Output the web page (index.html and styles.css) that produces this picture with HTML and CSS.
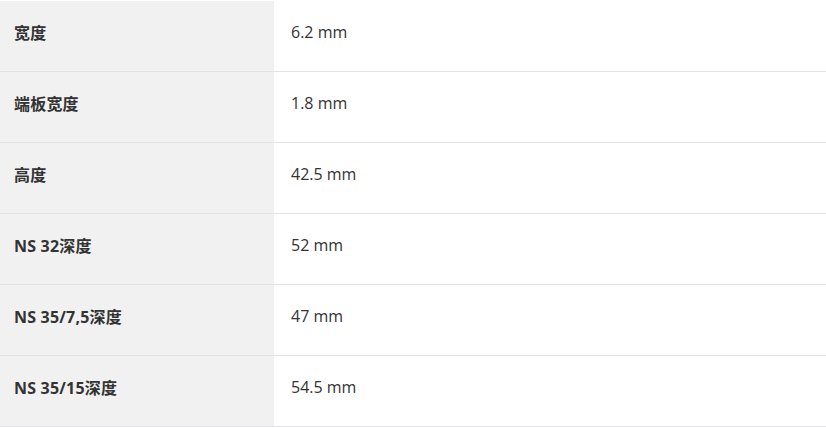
FILE: index.html
```html
<!DOCTYPE html>
<html lang="zh">
<head>
<meta charset="utf-8">
<link rel="stylesheet" href="styles.css">
</head>
<body>
<div class="specs">
  <div class="row"><div class="label">宽度</div><div class="value">6.2 mm</div></div>
  <div class="row"><div class="label">端板宽度</div><div class="value">1.8 mm</div></div>
  <div class="row"><div class="label">高度</div><div class="value">42.5 mm</div></div>
  <div class="row"><div class="label">NS 32深度</div><div class="value">52 mm</div></div>
  <div class="row"><div class="label">NS 35/7,5深度</div><div class="value">47 mm</div></div>
  <div class="row"><div class="label">NS 35/15深度</div><div class="value">54.5 mm</div></div>
</div>
</body>
</html>
```
FILE: styles.css
```css
html, body {
  margin: 0;
  padding: 0;
  background: #fff;
}
body {
  font-family: "Open Sans", "Noto Sans CJK SC", sans-serif;
  font-size: 16px;
  color: #333;
}
.specs {
  padding-top: 1px;
}
.row {
  display: grid;
  grid-template-columns: 274px 1fr;
  height: 70px;
  border-bottom: 1px solid #e2e2e8;
}
.label, .value {
  display: flex;
  align-items: center;
  padding-bottom: 9px;
  box-sizing: border-box;
}
.label {
  background: #f1f1f1;
  padding-left: 14px;
  font-weight: 700;
  letter-spacing: 0.2px;
}
.value {
  padding-left: 17px;
}
```
